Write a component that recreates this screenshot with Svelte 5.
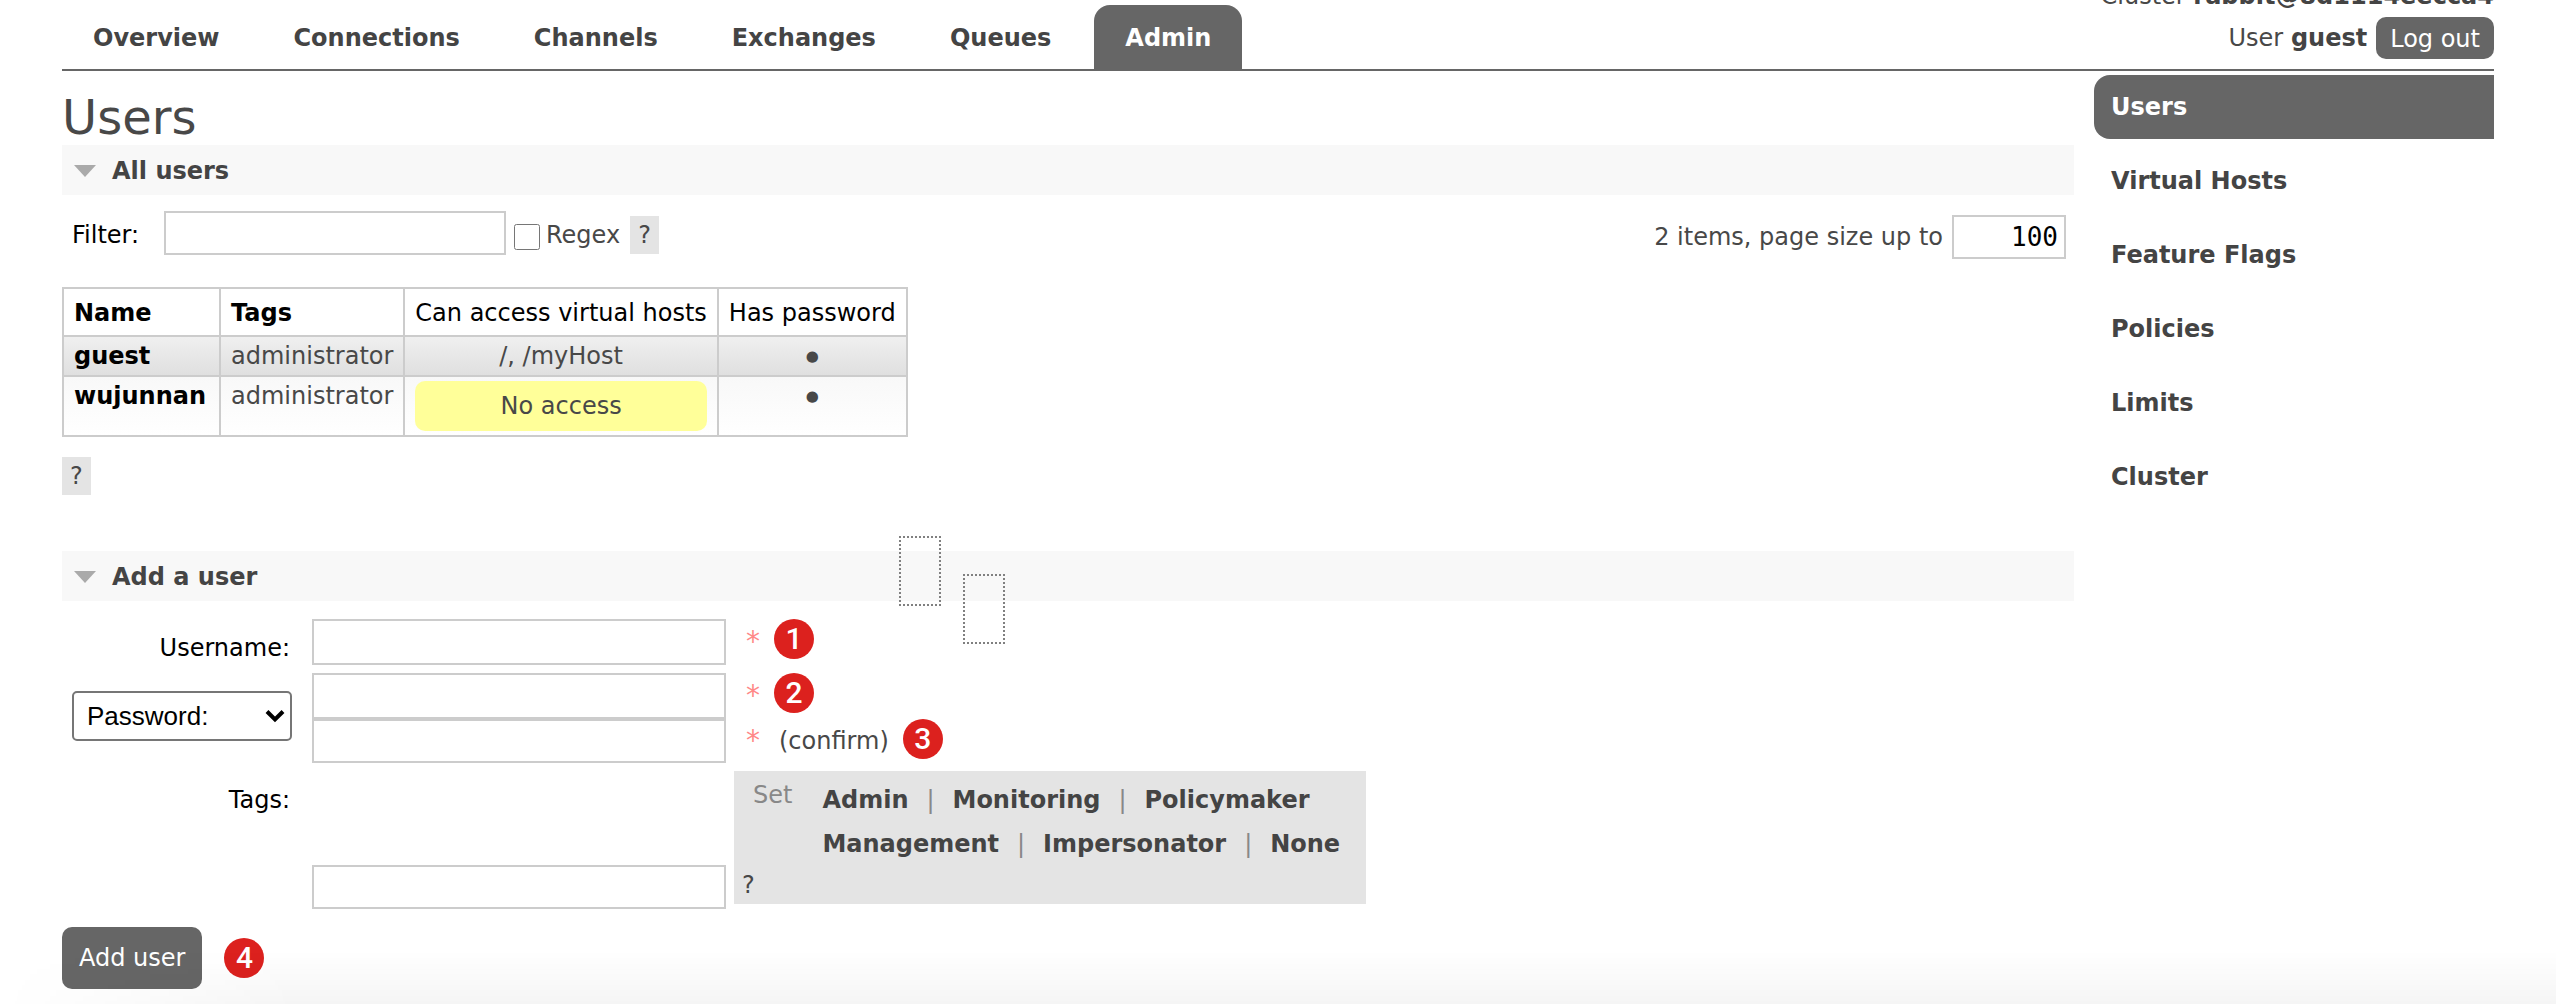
<script>
  const tabs = ['Overview', 'Connections', 'Channels', 'Exchanges', 'Queues', 'Admin'];
  const sections = ['Users', 'Virtual Hosts', 'Feature Flags', 'Policies', 'Limits', 'Cluster'];
  const users = [
    { name: 'guest', tags: 'administrator', hosts: '/, /myHost', password: true },
    { name: 'wujunnan', tags: 'administrator', hosts: '', password: true }
  ];
  const tagRows = [
    ['Admin', 'Monitoring', 'Policymaker'],
    ['Management', 'Impersonator', 'None']
  ];
  let filter = $state('');
  let regex = $state(false);
  let pageSize = $state('100');
</script>

<div class="page">
  <header>
    <nav class="tabs" aria-label="Main">
      {#each tabs as tab}
        <a href="#/{tab.toLowerCase()}" class:selected={tab === 'Admin'}>{tab}</a>
      {/each}
    </nav>
    <div class="login">
      <div>Cluster <b>rabbit@8d1114eecca4</b></div>
      <div class="who">
        <span>User <b>guest</b></span>
        <button type="button" class="logout">Log out</button>
      </div>
    </div>
  </header>

  <div class="columns">
    <main>
      <h1>Users</h1>

      <section>
        <h2><svg width="22" height="12" viewBox="0 0 22 12" aria-hidden="true"><path d="M0 0H22L11 12Z" fill="#aaa" /></svg>All users</h2>
        <div class="filter">
          <label class="filter-label" for="filter">Filter:</label>
          <input id="filter" class="filter-box" type="text" bind:value={filter} />
          <input id="regex" type="checkbox" bind:checked={regex} />
          <label for="regex">Regex</label>
          <button type="button" class="help">?</button>
          <div class="paging">
            <label for="size">2 items, page size up to</label>
            <input id="size" class="size" type="text" bind:value={pageSize} />
          </div>
        </div>

        <table>
          <thead>
            <tr>
              <th class="first-col">Name</th>
              <th>Tags</th>
              <th class="plain">Can access virtual hosts</th>
              <th class="plain">Has password</th>
            </tr>
          </thead>
          <tbody>
            {#each users as user}
              <tr>
                <td class="first-col"><a href="#/users/{user.name}">{user.name}</a></td>
                <td>{user.tags}</td>
                <td class="center">
                  {#if user.hosts}{user.hosts}{:else}<p class="warning">No access</p>{/if}
                </td>
                <td class="center dot">{user.password ? '●' : ''}</td>
              </tr>
            {/each}
          </tbody>
        </table>
        <button type="button" class="help table-help">?</button>
      </section>

      <section class="add">
        <h2><svg width="22" height="12" viewBox="0 0 22 12" aria-hidden="true"><path d="M0 0H22L11 12Z" fill="#aaa" /></svg>Add a user</h2>
        <form onsubmit={(e) => e.preventDefault()}>
          <div class="grid">
            <label class="name" for="username">Username:</label>
            <div class="line">
              <input id="username" type="text" />
              <span class="mand">*</span>
              <span class="step">1</span>
            </div>

            <div class="select">
              <select aria-label="Password type">
                <option>Password:</option>
                <option>No password</option>
              </select>
              <svg width="20" height="14" viewBox="0 0 20 14" aria-hidden="true"><path d="M2 2.5L10 10.5L18 2.5" fill="none" stroke="#000" stroke-width="4" /></svg>
            </div>
            <div>
              <div class="line">
                <input type="password" aria-label="Password" />
                <span class="mand">*</span>
                <span class="step">2</span>
              </div>
              <div class="line">
                <input class="short" type="password" aria-label="Confirm password" />
                <span class="mand">*</span>
                <span class="confirm">(confirm)</span>
                <span class="step">3</span>
              </div>
            </div>

            <label class="name" for="tags">Tags:</label>
            <div class="tagline">
              <input id="tags" class="short" type="text" />
              <div class="tagbox">
                <div class="set">
                  <span class="setlabel">Set</span>
                  <div>
                    {#each tagRows as row}
                      <div class="tagrow">
                        {#each row as tag, i}
                          {#if i}<span class="bar">|</span>{/if}
                          <button type="button" class="tag">{tag}</button>
                        {/each}
                      </div>
                    {/each}
                  </div>
                </div>
                <button type="button" class="help taghelp">?</button>
              </div>
            </div>
          </div>
          <div class="submit">
            <button class="adduser">Add user</button>
            <span class="step">4</span>
          </div>
        </form>
      </section>
    </main>

    <nav class="side" aria-label="Admin">
      {#each sections as item}
        <a href="#/{item.toLowerCase().replace(' ', '-')}" class:selected={item === 'Users'}>{item}</a>
      {/each}
    </nav>
  </div>

  <div class="marker first"></div>
  <div class="marker second"></div>
  <div class="shade"></div>
</div>

<style>
  :global(body) {
    margin: 0;
    background: #fff;
  }
  .page {
    position: relative;
    box-sizing: border-box;
    padding: 0 62px;
    min-height: 100vh;
    overflow: hidden;
    color: #484848;
    font: 24px/28px Verdana, 'DejaVu Sans', sans-serif;
  }
  a {
    color: #444;
    font-weight: bold;
    text-decoration: none;
  }
  b {
    color: #444;
  }
  button,
  input {
    box-sizing: border-box;
    margin: 0;
    font: inherit;
    color: inherit;
  }
  button {
    border: 0;
    padding: 0;
    background: none;
    cursor: pointer;
    white-space: nowrap;
  }

  header {
    display: flex;
    justify-content: space-between;
    padding-top: 5px;
    border-bottom: 2px solid #666;
  }
  .tabs {
    display: flex;
    gap: 12px;
  }
  .tabs a {
    padding: 19px 31px 17px;
    border-radius: 16px 16px 0 0;
  }
  .tabs .selected,
  .side .selected {
    background: #666;
    color: #fff;
  }
  .login {
    margin-top: -23px;
    text-align: right;
  }
  .who {
    display: flex;
    justify-content: flex-end;
    align-items: center;
    gap: 9px;
    padding-top: 7px;
  }
  .logout {
    padding: 8px 14px 6px;
    border-radius: 10px;
    background: #666;
    color: #fff;
  }

  .columns {
    display: flex;
    gap: 20px;
  }
  main {
    flex: 1;
  }
  .side {
    display: flex;
    flex-direction: column;
    gap: 10px;
    width: 400px;
    padding-top: 4px;
  }
  .side a {
    padding: 18px 17px;
    border-radius: 16px 0 0 16px;
  }

  h1 {
    margin: 0;
    padding: 18px 0 0;
    font-size: 48px;
    line-height: 56px;
    font-weight: normal;
  }
  h2 {
    display: flex;
    align-items: center;
    gap: 16px;
    margin: 0;
    padding: 12px 12px 10px;
    background: #f8f8f8;
    font-size: 24px;
    line-height: 28px;
    color: #444;
  }
  .filter {
    display: flex;
    align-items: center;
    padding: 16px 8px 28px 10px;
  }
  input[type='text'],
  input[type='password'] {
    height: 46px;
    border: 2px solid #ccc;
    border-radius: 0;
    padding: 0 8px;
    background: #fff;
    color: #000;
  }
  input.short,
  input.filter-box,
  input.size {
    height: 44px;
  }
  .filter-label {
    width: 92px;
    color: #000;
  }
  .filter-box {
    align-self: flex-start;
    width: 342px;
  }
  input[type='checkbox'] {
    width: 26px;
    height: 26px;
    margin: 4px 6px 0 8px;
  }
  .help {
    padding: 5px 8px;
    background: #e4e4e4;
    line-height: 28px;
  }
  .filter .help {
    margin-left: 10px;
  }
  .paging {
    display: flex;
    align-items: center;
    gap: 9px;
    margin-left: auto;
    padding-top: 4px;
  }
  input.size {
    width: 114px;
    padding: 0 6px;
    text-align: right;
    font-family: 'DejaVu Sans Mono', monospace;
    font-size: 26px;
  }

  table {
    border-collapse: collapse;
    line-height: 30px;
  }
  th,
  td {
    border: 2px solid #ccc;
    padding: 4px 10px;
    vertical-align: top;
    text-align: left;
  }
  th {
    padding: 9px 10px 7px;
    color: #000;
  }
  th.plain {
    font-weight: normal;
    text-align: center;
  }
  .first-col {
    padding-right: 13px;
  }
  td a {
    color: #000;
  }
  .center {
    text-align: center;
  }
  .dot {
    font-size: 15px;
  }
  tbody tr:nth-child(odd) {
    background: linear-gradient(#f0f0f0, #dfdfdf);
  }
  tbody tr:nth-child(even) {
    background: linear-gradient(#f8f8f8, #fff);
  }
  .warning {
    margin: 0;
    padding: 10px;
    border-radius: 10px;
    background: #ff9;
  }
  .table-help {
    display: block;
    margin-top: 20px;
  }

  .add {
    margin-top: 56px;
  }
  .grid {
    display: grid;
    grid-template-columns: 220px 1fr;
    gap: 8px 20px;
    padding: 18px 0 0 10px;
    align-items: start;
  }
  .name {
    padding: 15px 2px 0 0;
    text-align: right;
    color: #000;
  }
  .line {
    display: flex;
    align-items: center;
  }
  .line input,
  .tagline input {
    width: 414px;
  }
  .mand {
    margin: 0 14px 0 20px;
    color: #f88;
    font-size: 28px;
  }
  .confirm {
    margin: 0 14px 0 5px;
  }
  .step {
    align-self: flex-start;
    width: 40px;
    border-radius: 50%;
    background: #dc211e;
    color: #fff;
    font: 500 30px/40px Roboto, sans-serif;
    text-align: center;
  }
  .select {
    display: grid;
    align-items: center;
    margin-top: 18px;
  }
  .select > * {
    grid-area: 1 / 1;
  }
  .select svg {
    justify-self: end;
    margin-right: 7px;
    pointer-events: none;
  }
  select {
    appearance: none;
    height: 50px;
    border: 2px solid #767676;
    border-radius: 5px;
    padding: 0 13px;
    background: #fff;
    color: #000;
    font: 26px 'Liberation Sans', Arial, sans-serif;
  }
  .tagline {
    display: flex;
    align-items: flex-end;
    gap: 8px;
    min-height: 138px;
  }
  .tagbox {
    box-sizing: border-box;
    align-self: flex-start;
    width: 632px;
    padding: 7px 10px 0 19px;
    background: #e4e4e4;
  }
  .set {
    display: flex;
    gap: 30px;
  }
  .setlabel {
    padding-top: 3px;
    color: #888;
  }
  .tagrow {
    display: flex;
    align-items: center;
    height: 44px;
  }
  .tag {
    color: #444;
    font-weight: bold;
  }
  .bar {
    width: 44px;
    text-align: center;
    color: #888;
  }
  .taghelp {
    display: block;
    margin-left: -19px;
  }
  .submit {
    display: flex;
    align-items: center;
    gap: 22px;
    padding-top: 18px;
  }
  .submit .step {
    align-self: center;
  }
  .adduser {
    padding: 17px;
    border-radius: 10px;
    background: #666;
    color: #fff;
  }

  /* Drag outlines floating over the page */
  .marker {
    position: absolute;
    box-sizing: border-box;
    width: 42px;
    height: 70px;
    border: 2px dotted #808080;
  }
  .first {
    left: 899px;
    top: 536px;
  }
  .second {
    left: 963px;
    top: 574px;
  }
  .shade {
    position: absolute;
    inset: auto 0 0 0;
    height: 54px;
    background: linear-gradient(rgba(0, 0, 0, 0), rgba(0, 0, 0, 0.04));
    mask-image: linear-gradient(to right, transparent, #000 300px);
    pointer-events: none;
  }
</style>
